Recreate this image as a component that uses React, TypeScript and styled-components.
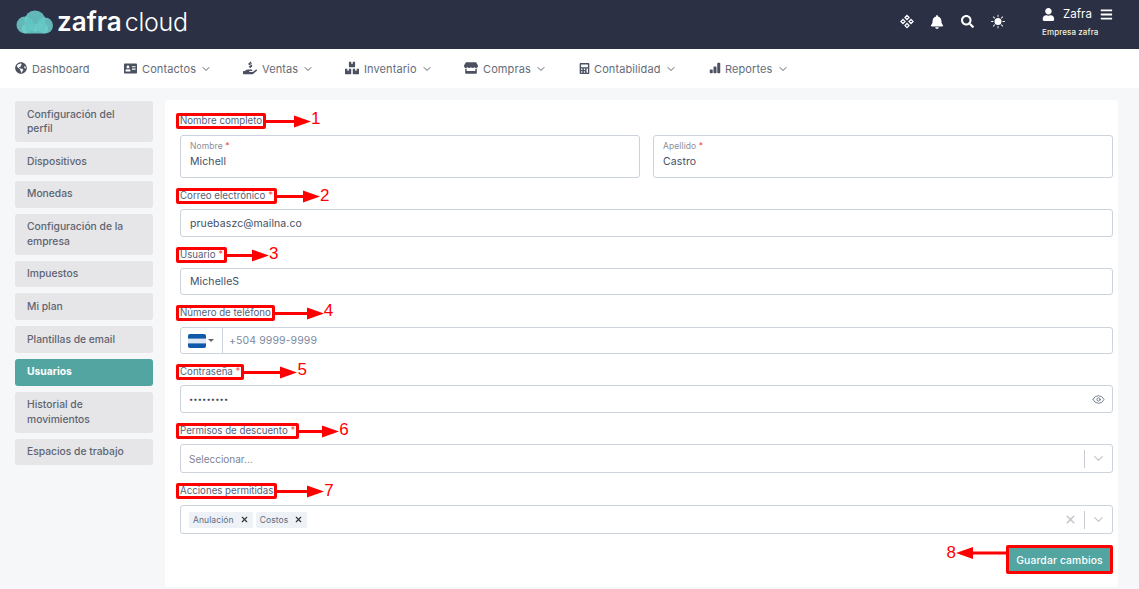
import React from "react";
import styled, { createGlobalStyle } from "styled-components";
import { FaBell, FaSearch, FaUser, FaBars, FaAddressCard, FaHandHoldingUsd, FaBoxes, FaStore, FaCalculator, FaGlobeAmericas } from "react-icons/fa";
import { BsSunFill, BsBarChartFill } from "react-icons/bs";
import { ChevronDown, Eye, X } from "lucide-react";

const Global = createGlobalStyle`
  html, body { margin: 0; padding: 0; background: #f6f7f9; }
  body { font-family: "Inter", "Liberation Sans", sans-serif; }
  * { box-sizing: border-box; }
`;
const Page = styled.div`
  width: 1139px; height: 589px; overflow: hidden; display: flex; flex-direction: column; background: #f6f7f9;
`;
const Header = styled.header`
  height: 49px; background: #2b3044; display: flex; align-items: center; padding: 0 26px 0 16px; color: #fff; flex: none;
`;
const Logo = styled.div`
  display: flex; align-items: center; gap: 3px; margin-top: -5px;
`;
const LogoWord = styled.div`
  display: flex; align-items: baseline; line-height: 30px; gap: 3px;
`;
const LogoBold = styled.span`
  font-family: "Inter", sans-serif; font-weight: 600; letter-spacing: 0; font-size: 26px;
`;
const LogoThin = styled.span`
  font-family: "Inter", sans-serif; font-weight: 300; letter-spacing: -0.3px; font-size: 25px;
`;
const HeaderRight = styled.div`
  margin-left: auto; display: flex; align-items: center;
`;
const HeaderIcons = styled.div`
  display: flex; align-items: center; gap: 16.4px; margin-right: 37px; margin-top: -6px;
`;
const HeaderIcon = styled.span`
  width: 14px; height: 14px; display: flex; align-items: center; justify-content: center; font-size: 14px;
`;
const UserBlock = styled.div`
  width: 71px; display: flex; flex-direction: column; gap: 7px; margin-top: -5px;
`;
const UserRow = styled.div`
  display: flex; align-items: center; font-size: 11px; line-height: 14px;
`;
const UserName = styled.span`
  margin-left: 8px; margin-right: 8px; font-size: 11.5px; letter-spacing: 0.1px;
`;
const Company = styled.div`
  font-size: 8px; line-height: 9px; color: #f4f1d8; white-space: nowrap; font-weight: 500; letter-spacing: 0.1px;
`;
const Nav = styled.nav`
  height: 39px; background: #fff; display: flex; align-items: center; padding: 0 0 0 15px; flex: none;
`;
const NavItem = styled.div<{ $w: number }>`
  width: ${(p) => p.$w}px; display: flex; align-items: center; color: #4f5563; font-size: 11px; flex: none;
`;
const NavIcon = styled.span<{ $w: number }>`
  width: ${(p) => p.$w}px; display: flex; align-items: center; color: #4b5160; font-size: 12px; flex: none; margin-top: -1px;
`;
const NavText = styled.span`
  color: #666b78; white-space: nowrap; letter-spacing: 0.1px;
`;
const NavChevron = styled.span`
  margin-left: 4px; display: flex; color: #5c6270;
`;
const Body = styled.div`
  flex: 1; display: flex; padding: 12px 21px 2px 15px; gap: 12px; min-height: 0;
`;
const Sidebar = styled.aside`
  width: 138px; flex: none; display: flex; flex-direction: column; gap: 6px; padding-top: 1px;
`;
const SideItem = styled.div<{ $active?: boolean; $two?: boolean }>`
  height: ${(p) => (p.$two ? 41.2 : 26.7)}px; padding: 0 12px 1px; border-radius: 3px; display: flex; align-items: center;
  background: ${(p) => (p.$active ? "#52a5a1" : "#e6e6e8")};
  color: ${(p) => (p.$active ? "#fff" : "#5e6472")};
  font-weight: ${(p) => (p.$active ? 700 : 500)};
  font-size: 10.3px; line-height: 14.5px;
`;
const Card = styled.main`
  flex: 1; background: #fff; border-radius: 3px; padding: 16px 5px 0 15px; display: flex; flex-direction: column; gap: 13px;
`;
const Field = styled.section<{ $gap?: number }>`
  display: flex; flex-direction: column; gap: ${(p) => p.$gap ?? 8}px;
`;
const LabelWrap = styled.div`
  position: relative; width: fit-content; height: 10px; line-height: 10px; font-size: 9.7px; color: #56617a; white-space: nowrap;
  &::after {
    content: ""; position: absolute; inset: -3px -4px; border: 3px solid #f00; border-radius: 2px; pointer-events: none;
  }
`;
const Star = styled.span`
  color: #ee5a5a;
`;
const Callout = styled.span`
  position: absolute; left: calc(100% + 4px); top: 50%; transform: translateY(-50%); display: flex; align-items: center; z-index: 2;
`;
const CalloutNum = styled.span<{ $up?: number }>`
  font-family: "Liberation Sans", sans-serif; font-size: 17px; line-height: 18px; color: #f00; margin-bottom: ${(p) => p.$up ?? 5}px;
`;
const Row = styled.div`
  display: grid; grid-template-columns: 1fr 1fr; gap: 13px;
`;
const Control = styled.div<{ $h: number }>`
  height: ${(p) => p.$h}px; border: 1px solid #cdd3dc; border-radius: 3px; display: flex; align-items: center; background: #fff;
  font-size: 10.5px; color: #3f5065; position: relative; letter-spacing: 0.1px;
`;
const PlainValue = styled.span`
  padding-left: 9px;
`;
const Floating = styled.div`
  display: flex; flex-direction: column; padding: 0 9px; gap: 4px; margin-top: -4px;
`;
const FloatLabel = styled.span`
  font-size: 8.5px; line-height: 10px; color: #8a8f99;
`;
const FloatValue = styled.span`
  font-size: 10.5px; line-height: 13px;
`;
const FlagBox = styled.div`
  width: 42px; height: 100%; border-right: 1px solid #cdd3dc; display: flex; align-items: center; padding-left: 7px; gap: 2px; flex: none;
`;
const Caret = styled.span`
  width: 0; height: 0; border-left: 3px solid transparent; border-right: 3px solid transparent; border-top: 3px solid #666;
`;
const Placeholder = styled.span`
  color: #7c8a9e; padding-left: 6px;
`;
const Dots = styled.span`
  padding-left: 8px; font-size: 7.5px; letter-spacing: 0.15px; color: #3f4a5a;
`;
const Indicators = styled.div`
  margin-left: auto; display: flex; align-items: center; color: #c4c8cf; padding-right: 6px; flex: none;
`;
const Separator = styled.span`
  width: 1px; height: 18px; background: #c8ccd2; margin: 0 6px 0 7px;
`;
const EyeSlot = styled.span`
  margin-left: auto; padding-right: 7px; display: flex; color: #66707f;
`;
const SelectPlaceholder = styled.span`
  padding-left: 8px; color: #7d8491; font-size: 10px; letter-spacing: 0;
`;
const Tags = styled.div`
  display: flex; gap: 3px; padding-left: 8px;
`;
const Tag = styled.span`
  height: 16px; background: #eef1f6; border-radius: 2px; display: flex; align-items: center; font-size: 8.5px; color: #5d6b82; padding: 0 4px; gap: 6px;
`;
const Footer = styled.div`
  display: flex; justify-content: flex-end; margin-top: -2px;
`;
const SaveWrap = styled.div`
  position: relative;
`;
const SaveButton = styled.button`
  width: 107px; height: 29px; background: #52a5a1; border: 3px solid #f00; border-radius: 2px; color: #fff;
  font-family: inherit; font-size: 10.3px; font-weight: 500; padding: 0; letter-spacing: 0.15px;
`;
const BackCallout = styled.span`
  position: absolute; right: 100%; top: calc(50% - 7px); transform: translateY(-50%); display: flex; align-items: center;
`;

const Arrow = ({ len, flip }: { len: number; flip?: boolean }) => (
  <svg width={len} height={14} viewBox={`0 0 ${len} 14`} style={{ flex: "none", transform: flip ? "scaleX(-1)" : undefined }}>
    <rect x={0} y={5.5} width={len - 10} height={3} fill="#f00" />
    <polygon points={`${len - 17},1 ${len},7 ${len - 17},13`} fill="#f00" />
  </svg>
);

const Label = ({ text, req, n, len, up }: { text: string; req?: boolean; n: number; len: number; up?: number }) => (
  <LabelWrap>
    {text}
    {req && <Star> *</Star>}
    <Callout>
      <Arrow len={len} />
      <CalloutNum $up={up}>{n}</CalloutNum>
    </Callout>
  </LabelWrap>
);

const CloudLogo = () => (
  <svg width="38" height="24" viewBox="0 0 38 24">
    <g fill="#6fcfcc" fillOpacity="0.85">
      <circle cx="9" cy="15" r="8.5" />
      <circle cx="19" cy="11" r="10.5" />
      <circle cx="29" cy="15.5" r="8" />
      <rect x="6" y="14" width="26" height="9.5" rx="4.5" />
    </g>
    <ellipse cx="14" cy="15" rx="5" ry="8.5" fill="#57bdb9" fillOpacity="0.5" />
    <ellipse cx="25" cy="15" rx="5" ry="8.5" fill="#57bdb9" fillOpacity="0.35" />
  </svg>
);

const Diamonds = () => (
  <svg width="15" height="15" viewBox="0 0 15 15" fill="none" stroke="#fff" strokeWidth="1.3">
    <path d="M7.5 1 L9.7 3.2 L7.5 5.4 L5.3 3.2 Z" />
    <path d="M3.2 5.3 L5.4 7.5 L3.2 9.7 L1 7.5 Z" />
    <path d="M11.8 5.3 L14 7.5 L11.8 9.7 L9.6 7.5 Z" />
    <path d="M7.5 9.6 L9.7 11.8 L7.5 14 L5.3 11.8 Z" />
  </svg>
);

const Flag = () => (
  <svg width="18" height="14" viewBox="0 0 18 14" style={{ borderRadius: 2 }}>
    <rect width="18" height="14" fill="#dfe7f2" />
    <rect width="18" height="4.6" fill="#0f5aa8" />
    <rect y="9.4" width="18" height="4.6" fill="#0f5aa8" />
  </svg>
);

const navItems = [
  { t: "Dashboard", w: 109, iw: 17, i: <FaGlobeAmericas size={12} /> },
  { t: "Contactos", w: 119, iw: 18, i: <FaAddressCard size={13} />, c: true },
  { t: "Ventas", w: 102, iw: 19, i: <FaHandHoldingUsd size={14} />, c: true },
  { t: "Inventario", w: 119, iw: 19, i: <FaBoxes size={14} />, c: true },
  { t: "Compras", w: 115, iw: 19, i: <FaStore size={14} />, c: true },
  { t: "Contabilidad", w: 130, iw: 15, i: <FaCalculator size={11} />, c: true },
  { t: "Reportes", w: 90, iw: 16, i: <BsBarChartFill size={12} />, c: true },
];

const side = [
  { t: "Configuración del perfil", two: true },
  { t: "Dispositivos" },
  { t: "Monedas" },
  { t: "Configuración de la empresa", two: true },
  { t: "Impuestos" },
  { t: "Mi plan" },
  { t: "Plantillas de email" },
  { t: "Usuarios", active: true },
  { t: "Historial de movimientos", two: true },
  { t: "Espacios de trabajo" },
];

export default function App() {
  return (
    <Page>
      <Global />
      <Header>
        <Logo>
          <CloudLogo />
          <LogoWord>
            <LogoBold>zafra</LogoBold>
            <LogoThin>cloud</LogoThin>
          </LogoWord>
        </Logo>
        <HeaderRight>
          <HeaderIcons>
            <HeaderIcon><Diamonds /></HeaderIcon>
            <HeaderIcon><FaBell size={14} /></HeaderIcon>
            <HeaderIcon><FaSearch size={13} /></HeaderIcon>
            <HeaderIcon><BsSunFill size={15} /></HeaderIcon>
          </HeaderIcons>
          <UserBlock>
            <UserRow>
              <FaUser size={13} />
              <UserName>Zafra</UserName>
              <FaBars size={13} />
            </UserRow>
            <Company>Empresa zafra</Company>
          </UserBlock>
        </HeaderRight>
      </Header>
      <Nav>
        {navItems.map((n) => (
          <NavItem key={n.t} $w={n.w}>
            <NavIcon $w={n.iw}>{n.i}</NavIcon>
            <NavText>{n.t}</NavText>
            {n.c && (
              <NavChevron>
                <ChevronDown size={12} strokeWidth={2} />
              </NavChevron>
            )}
          </NavItem>
        ))}
      </Nav>
      <Body>
        <Sidebar>
          {side.map((s) => (
            <SideItem key={s.t} $two={s.two} $active={s.active}>
              {s.t}
            </SideItem>
          ))}
        </Sidebar>
        <Card>
          <Field $gap={9}>
            <Label text="Nombre completo" n={1} len={45} />
            <Row>
              <Control $h={43}>
                <Floating>
                  <FloatLabel>Nombre <Star>*</Star></FloatLabel>
                  <FloatValue>Michell</FloatValue>
                </Floating>
              </Control>
              <Control $h={43}>
                <Floating>
                  <FloatLabel>Apellido <Star>*</Star></FloatLabel>
                  <FloatValue>Castro</FloatValue>
                </Floating>
              </Control>
            </Row>
          </Field>
          <Field>
            <Label text="Correo electrónico" req n={2} len={43} up={1} />
            <Control $h={28}><PlainValue>pruebaszc@mailna.co</PlainValue></Control>
          </Field>
          <Field>
            <Label text="Usuario" req n={3} len={42} up={3} />
            <Control $h={27}><PlainValue>MichelleS</PlainValue></Control>
          </Field>
          <Field $gap={9}>
            <Label text="Número de teléfono" n={4} len={49} />
            <Control $h={27}>
              <FlagBox><Flag /><Caret /></FlagBox>
              <Placeholder>+504 9999-9999</Placeholder>
            </Control>
          </Field>
          <Field>
            <Label text="Contraseña" req n={5} len={53} />
            <Control $h={28}>
              <Dots>•••••••••</Dots>
              <EyeSlot><Eye size={13} strokeWidth={1.6} /></EyeSlot>
            </Control>
          </Field>
          <Field>
            <Label text="Permisos de descuento" req n={6} len={40} up={3} />
            <Control $h={29}>
              <SelectPlaceholder>Seleccionar...</SelectPlaceholder>
              <Indicators>
                <Separator />
                <ChevronDown size={15} strokeWidth={2} />
              </Indicators>
            </Control>
          </Field>
          <Field $gap={9}>
            <Label text="Acciones permitidas" n={7} len={47} up={1} />
            <Control $h={29}>
              <Tags>
                <Tag>Anulación <X size={9} strokeWidth={3} color="#333" /></Tag>
                <Tag>Costos <X size={9} strokeWidth={3} color="#333" /></Tag>
              </Tags>
              <Indicators>
                <X size={13} strokeWidth={3} />
                <Separator />
                <ChevronDown size={15} strokeWidth={2} />
              </Indicators>
            </Control>
          </Field>
          <Footer>
            <SaveWrap>
              <BackCallout>
                <CalloutNum $up={0}>8</CalloutNum>
                <Arrow len={50} flip />
              </BackCallout>
              <SaveButton>Guardar cambios</SaveButton>
            </SaveWrap>
          </Footer>
        </Card>
      </Body>
    </Page>
  );
}
